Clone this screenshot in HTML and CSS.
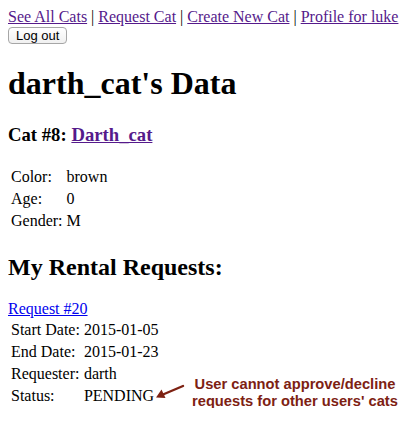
FILE: index.html
```html
<!DOCTYPE html>
<html>
<head>
<meta charset="utf-8">
<link rel="stylesheet" href="styles.css">
</head>
<body>
<div class="nav">
  <a class="visited" href="#">See All Cats</a> | <a class="visited" href="#">Request Cat</a> | <a class="visited" href="#">Create New Cat</a> | <a class="visited" href="#">Profile for luke</a>
</div>
<button class="logout">Log out</button>
<h1>darth_cat's Data</h1>
<h3>Cat #8: <a class="visited" href="#">Darth_cat</a></h3>
<table>
  <tr><td>Color:</td><td>brown</td></tr>
  <tr><td>Age:</td><td>0</td></tr>
  <tr><td>Gender:</td><td>M</td></tr>
</table>
<h2>My Rental Requests:</h2>
<div class="request">
  <a class="fresh" href="#">Request #20</a>
  <table>
    <tr><td>Start Date:</td><td>2015-01-05</td></tr>
    <tr><td>End Date:</td><td>2015-01-23</td></tr>
    <tr><td>Requester:</td><td>darth</td></tr>
    <tr><td>Status:</td><td>PENDING</td></tr>
  </table>
  <div class="note">
    <svg class="arrow" width="30" height="16" viewBox="0 0 30 16">
      <line x1="28" y1="2" x2="8" y2="10.5" stroke="#7d2112" stroke-width="2.4" stroke-linecap="round"/>
      <polygon points="1,13.5 6.5,5.5 10.5,14" fill="#7d2112"/>
    </svg>
    <div class="note-text">User cannot approve/decline<br>requests for other users' cats</div>
  </div>
</div>
</body>
</html>
```
FILE: styles.css
```css
body {
  margin: 8px;
  font-family: "Liberation Serif", "Times New Roman", serif;
  font-size: 16px;
  line-height: 18px;
  color: #000;
  background: #fff;
}
a { text-decoration: underline; }
a.visited { color: #551a8b; }
a.fresh { color: #0000ee; }
.logout {
  font-family: "Liberation Sans", Arial, sans-serif;
  font-size: 13px;
  margin: 1px 0 0 0;
  padding: 0 7px;
  height: 17px;
  line-height: 15px;
  background: linear-gradient(#ffffff, #f0f0f0);
  border: 1px solid #a6a6a6;
  border-radius: 4px;
  color: #000;
  display: block;
}
h1 {
  font-size: 32px;
  line-height: 37px;
  margin: 21.44px 0;
}
h3 {
  font-size: 18.72px;
  line-height: 22px;
  margin: 18.72px 0;
}
h2 {
  font-size: 24px;
  line-height: 28px;
  margin: 19.92px 0;
}
table {
  border-spacing: 2px;
}
td {
  padding: 1px;
  line-height: 18px;
  font-size: 16px;
}
.request {
  position: relative;
}
.note {
  position: absolute;
  left: 147px;
  top: 76px;
  display: flex;
  align-items: flex-start;
}
.arrow {
  margin-top: 8px;
  margin-right: 7px;
}
.note-text {
  font-family: "Liberation Sans", Arial, sans-serif;
  font-weight: bold;
  font-size: 14.7px;
  line-height: 17px;
  color: #7d2112;
  text-align: center;
}
```
